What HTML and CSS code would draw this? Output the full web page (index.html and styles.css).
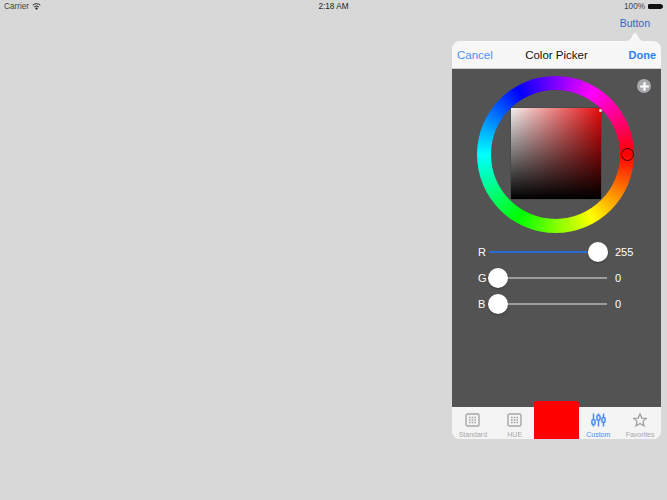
FILE: index.html
```html
<!DOCTYPE html>
<html lang="en">

<head>
    <meta charset="UTF-8">
    <meta name="viewport" content="width=device-width, initial-scale=1.0">
    <title>Color Picker</title>
    <link rel="stylesheet" href="styles.css">
</head>

<body>
    <div class="status-bar">
        <div class="status-left">
            <span>Carrier</span>
            <svg class="wifi" width="9" height="7" viewBox="0 0 9 7">
                <path d="M4.5 7 L3 5 A2.4 2.4 0 0 1 6 5 Z" fill="#222" />
                <path d="M2.2 3.9 A3.6 3.6 0 0 1 6.8 3.9" fill="none" stroke="#222" stroke-width="1" />
                <path d="M0.7 2.2 A5.6 5.6 0 0 1 8.3 2.2" fill="none" stroke="#222" stroke-width="1" />
            </svg>
        </div>
        <div class="status-time">2:18 AM</div>
        <div class="status-right">
            <span>100%</span>
            <div class="battery"></div>
        </div>
    </div>

    <div class="nav-bar">
        <a class="nav-button">Button</a>
    </div>

    <div class="popover">
        <svg class="popover-arrow" width="18" height="9" viewBox="0 0 18 9">
            <path d="M0 9 C3 9 5 7 7 2.5 Q9 -1 11 2.5 C13 7 15 9 18 9 Z" fill="#f7f7f7" />
        </svg>
        <div class="picker-header">
            <a class="link">Cancel</a>
            <span class="picker-title">Color Picker</span>
            <a class="link link-done">Done</a>
        </div>

        <div class="picker-body">
            <div class="add-button">
                <svg width="13" height="13" viewBox="0 0 13 13">
                    <path d="M6.5 2.2 V10.8 M2.2 6.5 H10.8" stroke="#fff" stroke-width="2.2" />
                </svg>
            </div>
            <div class="wheel">
                <div class="wheel-hole">
                    <div class="square"></div>
                </div>
                <div class="square-marker"></div>
                <div class="wheel-marker"></div>
            </div>

            <div class="sliders">
                <div class="slider-row">
                    <span class="slider-label">R</span>
                    <div class="slider-track track-full"><div class="thumb thumb-end"></div></div>
                    <span class="slider-value">255</span>
                </div>
                <div class="slider-row">
                    <span class="slider-label">G</span>
                    <div class="slider-track"><div class="thumb"></div></div>
                    <span class="slider-value">0</span>
                </div>
                <div class="slider-row">
                    <span class="slider-label">B</span>
                    <div class="slider-track"><div class="thumb"></div></div>
                    <span class="slider-value">0</span>
                </div>
            </div>
        </div>

        <div class="tab-bar">
            <div class="tab">
                <svg width="15" height="14" viewBox="0 0 15 14">
                    <rect x="1" y="1" width="13" height="12" rx="1.5" fill="none" stroke="#a6a6a6" stroke-width="1.4" />
                    <path d="M4 4.5 H11 M4 7 H11 M4 9.5 H11" stroke="#a6a6a6" stroke-width="1.6" stroke-dasharray="1.6 1.1" />
                </svg>
                <span>Standard</span>
            </div>
            <div class="tab">
                <svg width="15" height="14" viewBox="0 0 15 14">
                    <rect x="1" y="1" width="13" height="12" rx="1.5" fill="none" stroke="#a6a6a6" stroke-width="1.4" />
                    <path d="M4 4.5 H11 M4 7 H11 M4 9.5 H11" stroke="#a6a6a6" stroke-width="1.6" stroke-dasharray="1.6 1.1" />
                </svg>
                <span>HUE</span>
            </div>
            <div class="tab">
                <div class="swatch"></div>
            </div>
            <div class="tab tab-active">
                <svg width="15" height="14" viewBox="0 0 15 14">
                    <g fill="none" stroke="#4a8cf5" stroke-width="1.5">
                        <path d="M2.5 0.5 V13.5 M7.5 0.5 V13.5 M12.5 0.5 V13.5" />
                        <rect x="0.9" y="6.6" width="3.2" height="5" rx="1.5" fill="#dbe8fd" />
                        <rect x="5.9" y="2.2" width="3.2" height="5" rx="1.5" fill="#dbe8fd" />
                        <rect x="10.9" y="4.6" width="3.2" height="5" rx="1.5" fill="#dbe8fd" />
                    </g>
                </svg>
                <span>Custom</span>
            </div>
            <div class="tab">
                <svg width="14" height="14" viewBox="0 0 14 14">
                    <path d="M7 1 L8.8 5.1 L13.3 5.4 L9.9 8.4 L11 12.9 L7 10.5 L3 12.9 L4.1 8.4 L0.7 5.4 L5.2 5.1 Z" fill="none" stroke="#9a9a9a" stroke-width="1.2" />
                </svg>
                <span>Favorites</span>
            </div>
        </div>
    </div>
</body>

</html>
```

FILE: styles.css
```css
html,
body {
    margin: 0;
    height: 100%;
}

body {
    width: 667px;
    height: 500px;
    overflow: hidden;
    background-color: #d8d8d8;
    font-family: 'Liberation Sans', Arial, sans-serif;
    color: #111;
}

/* Status bar */
.status-bar {
    height: 13px;
    padding: 0 4px;
    display: grid;
    grid-template-columns: 1fr auto 1fr;
    align-items: center;
    font-size: 8.2px;
    color: #444;
}

.status-left {
    display: flex;
    align-items: center;
    gap: 3px;
}

.status-time {
    color: #222;
}

.status-right {
    display: flex;
    justify-content: flex-end;
    align-items: center;
    gap: 3px;
}

.battery {
    position: relative;
    width: 12px;
    height: 3px;
    margin-right: 1px;
    background-color: #111;
    border: 1px solid #111;
    border-radius: 1px;
}

.battery::after {
    content: "";
    position: absolute;
    top: 0;
    right: -2px;
    width: 1px;
    height: 3px;
    background-color: #333;
}

/* Button above the popover */
.nav-bar {
    display: flex;
    justify-content: flex-end;
    padding: 4px 17px 0 0;
    height: 25px;
    box-sizing: border-box;
}

.nav-button {
    color: #3468bd;
    font-size: 10.5px;
    line-height: 13px;
}

/* Popover */
.popover {
    position: relative;
    width: 209px;
    margin: 3px 0 0 452px;
    border-radius: 8px;
    background-color: #f7f7f7;
}

.popover-arrow {
    position: absolute;
    top: -9px;
    left: 174px;
}

.picker-header {
    height: 28px;
    padding: 0 5px;
    box-sizing: border-box;
    display: grid;
    grid-template-columns: 1fr auto 1fr;
    align-items: center;
    border-bottom: 1px solid #d0d0d0;
    font-size: 11.5px;
}

.link {
    color: #4a90f5;
}

.link-done {
    color: #2f7ff0;
    font-weight: bold;
    font-size: 11px;
    text-align: right;
}

.picker-title {
    color: #111;
}

.picker-body {
    position: relative;
    height: 338px;
    padding-top: 7px;
    box-sizing: border-box;
    background-color: #535353;
}

.add-button {
    position: absolute;
    top: 10px;
    right: 10px;
    width: 14px;
    height: 14px;
    border-radius: 50%;
    background-color: #a7a9ac;
    display: flex;
    align-items: center;
    justify-content: center;
}

/* Wheel */
.wheel {
    position: relative;
    width: 157px;
    height: 157px;
    margin-left: 25px;
    border-radius: 50%;
    background: conic-gradient(from 90deg, #f00, #ff0, #0f0, #0ff, #00f, #f0f, #f00);
    display: flex;
    align-items: center;
    justify-content: center;
}

.wheel-hole {
    width: 129px;
    height: 129px;
    border-radius: 50%;
    background-color: #535353;
    display: flex;
    align-items: center;
    justify-content: center;
}

.square {
    width: 90px;
    height: 91px;
    margin: 0 0 2px 1px;
    background:
        linear-gradient(to bottom, rgba(0, 0, 0, 0), #000),
        linear-gradient(to right, #f4f0f0, #e60a0a);
    box-shadow: 0 0 1px rgba(0, 0, 0, 0.6);
}

.square-marker {
    position: absolute;
    top: 33px;
    left: 122px;
    width: 3px;
    height: 3px;
    border-radius: 50%;
    background-color: #f4d4d4;
}

.wheel-marker {
    position: absolute;
    top: 72px;
    left: 144px;
    width: 11px;
    height: 11px;
    border: 1px solid #400000;
    border-radius: 50%;
}

/* Sliders */
.sliders {
    margin-top: 6px;
    padding-left: 26px;
    display: flex;
    flex-direction: column;
}

.slider-row {
    height: 26px;
    display: flex;
    align-items: center;
    color: #fff;
    font-size: 11px;
}

.slider-label {
    width: 11px;
}

.slider-track {
    position: relative;
    width: 118px;
    height: 2px;
    background-color: #9c9c9c;
}

.track-full {
    background-color: #2a6cd6;
}

.thumb {
    position: absolute;
    top: -9px;
    left: -1px;
    width: 20px;
    height: 20px;
    border-radius: 50%;
    background-color: #fff;
    box-shadow: 0 1px 2px rgba(0, 0, 0, 0.3);
}

.thumb-end {
    left: auto;
    right: -1px;
}

.slider-value {
    margin-left: 8px;
}

/* Tabs */
.tab-bar {
    height: 32px;
    display: grid;
    grid-template-columns: repeat(5, 1fr);
    font-size: 7px;
    color: #a8a8a8;
    background-color: #f4f4f4;
    border-radius: 0 0 8px 8px;
}

.tab {
    position: relative;
    padding-top: 6px;
    display: flex;
    flex-direction: column;
    align-items: center;
    gap: 4px;
}

.tab-active {
    color: #4a8cf5;
}

.swatch {
    position: absolute;
    top: -6px;
    left: -2px;
    width: 45px;
    height: 38px;
    border-radius: 3px 3px 0 0;
    background-color: #f00;
}
```
